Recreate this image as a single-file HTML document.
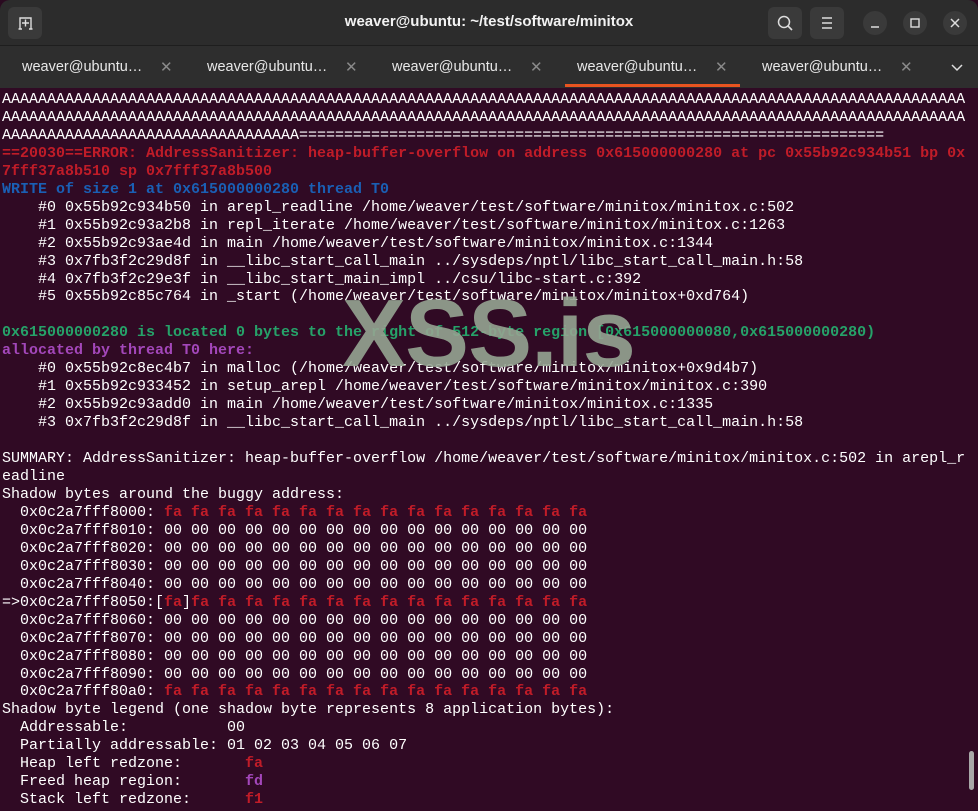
<!DOCTYPE html>
<html><head><meta charset="utf-8"><style>
*{margin:0;padding:0;box-sizing:border-box}
html,body{width:978px;height:811px;overflow:hidden;background:#2a0a20}
#win{position:absolute;left:0;top:0;width:978px;height:811px;background:#300a24;border-radius:10px 10px 0 0;overflow:hidden}
#title{position:absolute;left:0;top:0;width:978px;height:46px;background:#2c2c2c;border-bottom:1px solid #1e1e1e}
#title .t{position:absolute;left:0;width:978px;top:13px;text-align:center;color:#f2f2f2;font:bold 15px "Liberation Sans",sans-serif}
.btn{position:absolute;top:7px;width:34px;height:32px;border-radius:6px;background:#3a3a3a}
.circ{position:absolute;top:11px;width:24px;height:24px;border-radius:12px;background:#3a3a3a}
#tabs{position:absolute;left:0;top:46px;width:978px;height:42px;background:#2e2e2e}
.tab{position:absolute;top:13px;color:#e8e8e8;font:14.5px "Liberation Sans",sans-serif}
.x{position:absolute;top:12px;color:#8a8a8a;font:15px "Liberation Sans",sans-serif}
#ul{position:absolute;left:565px;top:38px;width:175px;height:3px;background:#e95420}
pre{position:absolute;left:2px;top:91px;font:15px/17.95px "Liberation Mono",monospace;color:#ffffff;white-space:pre}
.r{color:#c01c28;font-weight:bold}.g{color:#26a269;font-weight:bold}.p{color:#a347ba;font-weight:bold}.bl{color:#1a5fb4;font-weight:bold}
#wm{position:absolute;left:342px;top:279px;font:bold 96px "Liberation Sans",sans-serif;color:#95a592;opacity:.9;letter-spacing:-1px}
#sb{position:absolute;left:969px;top:751px;width:5px;height:39px;border-radius:3px;background:#a8a8a8}
</style></head><body><div id="win">
<div id="title">
<div class="btn" style="left:8px"><svg width="34" height="32"><path d="M12 22 V11 H23 V22 M14 16 H21 M17.5 12.5 V19.5" stroke="#ddd" stroke-width="1.4" fill="none"/><path d="M10.5 22 H14 M21 22 H24.5" stroke="#ddd" stroke-width="1.4"/></svg></div>
<div class="t">weaver@ubuntu: ~/test/software/minitox</div>
<div class="btn" style="left:768px"><svg width="34" height="32"><circle cx="16" cy="15" r="5.5" stroke="#ddd" stroke-width="1.5" fill="none"/><path d="M20 19 L24 23" stroke="#ddd" stroke-width="1.6"/></svg></div>
<div class="btn" style="left:810px"><svg width="34" height="32"><path d="M12 11H22M12 16H22M12 21H22" stroke="#ddd" stroke-width="1.4"/></svg></div>
<div class="circ" style="left:863px"><svg width="24" height="24"><path d="M8 16H16" stroke="#ddd" stroke-width="1.5"/></svg></div>
<div class="circ" style="left:903px"><svg width="24" height="24"><rect x="8" y="8" width="8" height="8" stroke="#ddd" stroke-width="1.4" fill="none"/></svg></div>
<div class="circ" style="left:943px"><svg width="24" height="24"><path d="M8 8L16 16M16 8L8 16" stroke="#ddd" stroke-width="1.5"/></svg></div>
</div>
<div id="tabs">
<div class="tab" style="left:22px">weaver@ubuntu…</div><div class="x" style="left:160px">✕</div>
<div class="tab" style="left:207px">weaver@ubuntu…</div><div class="x" style="left:345px">✕</div>
<div class="tab" style="left:392px">weaver@ubuntu…</div><div class="x" style="left:530px">✕</div>
<div class="tab" style="left:577px">weaver@ubuntu…</div><div class="x" style="left:715px">✕</div>
<div class="tab" style="left:762px">weaver@ubuntu…</div><div class="x" style="left:900px">✕</div>
<svg style="position:absolute;left:950px;top:16px" width="14" height="10"><path d="M2 3L7 8L12 3" stroke="#ddd" stroke-width="1.5" fill="none"/></svg>
<div id="ul"></div>
</div>
<pre>AAAAAAAAAAAAAAAAAAAAAAAAAAAAAAAAAAAAAAAAAAAAAAAAAAAAAAAAAAAAAAAAAAAAAAAAAAAAAAAAAAAAAAAAAAAAAAAAAAAAAAAAAAA
AAAAAAAAAAAAAAAAAAAAAAAAAAAAAAAAAAAAAAAAAAAAAAAAAAAAAAAAAAAAAAAAAAAAAAAAAAAAAAAAAAAAAAAAAAAAAAAAAAAAAAAAAAA
AAAAAAAAAAAAAAAAAAAAAAAAAAAAAAAAA=================================================================
<span class="r">==20030==ERROR: AddressSanitizer: heap-buffer-overflow on address 0x615000000280 at pc 0x55b92c934b51 bp 0x
7fff37a8b510 sp 0x7fff37a8b500</span>
<span class="bl">WRITE of size 1 at 0x615000000280 thread T0</span>
    #0 0x55b92c934b50 in arepl_readline /home/weaver/test/software/minitox/minitox.c:502
    #1 0x55b92c93a2b8 in repl_iterate /home/weaver/test/software/minitox/minitox.c:1263
    #2 0x55b92c93ae4d in main /home/weaver/test/software/minitox/minitox.c:1344
    #3 0x7fb3f2c29d8f in __libc_start_call_main ../sysdeps/nptl/libc_start_call_main.h:58
    #4 0x7fb3f2c29e3f in __libc_start_main_impl ../csu/libc-start.c:392
    #5 0x55b92c85c764 in _start (/home/weaver/test/software/minitox/minitox+0xd764)

<span class="g">0x615000000280 is located 0 bytes to the right of 512-byte region [0x615000000080,0x615000000280)</span>
<span class="p">allocated by thread T0 here:</span>
    #0 0x55b92c8ec4b7 in malloc (/home/weaver/test/software/minitox/minitox+0x9d4b7)
    #1 0x55b92c933452 in setup_arepl /home/weaver/test/software/minitox/minitox.c:390
    #2 0x55b92c93add0 in main /home/weaver/test/software/minitox/minitox.c:1335
    #3 0x7fb3f2c29d8f in __libc_start_call_main ../sysdeps/nptl/libc_start_call_main.h:58

SUMMARY: AddressSanitizer: heap-buffer-overflow /home/weaver/test/software/minitox/minitox.c:502 in arepl_r
eadline
Shadow bytes around the buggy address:
  0x0c2a7fff8000: <span class="r">fa fa fa fa fa fa fa fa fa fa fa fa fa fa fa fa</span>
  0x0c2a7fff8010: 00 00 00 00 00 00 00 00 00 00 00 00 00 00 00 00
  0x0c2a7fff8020: 00 00 00 00 00 00 00 00 00 00 00 00 00 00 00 00
  0x0c2a7fff8030: 00 00 00 00 00 00 00 00 00 00 00 00 00 00 00 00
  0x0c2a7fff8040: 00 00 00 00 00 00 00 00 00 00 00 00 00 00 00 00
=&gt;0x0c2a7fff8050:[<span class="r">fa</span>]<span class="r">fa fa fa fa fa fa fa fa fa fa fa fa fa fa fa</span>
  0x0c2a7fff8060: 00 00 00 00 00 00 00 00 00 00 00 00 00 00 00 00
  0x0c2a7fff8070: 00 00 00 00 00 00 00 00 00 00 00 00 00 00 00 00
  0x0c2a7fff8080: 00 00 00 00 00 00 00 00 00 00 00 00 00 00 00 00
  0x0c2a7fff8090: 00 00 00 00 00 00 00 00 00 00 00 00 00 00 00 00
  0x0c2a7fff80a0: <span class="r">fa fa fa fa fa fa fa fa fa fa fa fa fa fa fa fa</span>
Shadow byte legend (one shadow byte represents 8 application bytes):
  Addressable:           00
  Partially addressable: 01 02 03 04 05 06 07
  Heap left redzone:       <span class="r">fa</span>
  Freed heap region:       <span class="p">fd</span>
  Stack left redzone:      <span class="r">f1</span></pre>
<div id="wm">XSS.is</div>
<div id="sb"></div>
</div></body></html>
